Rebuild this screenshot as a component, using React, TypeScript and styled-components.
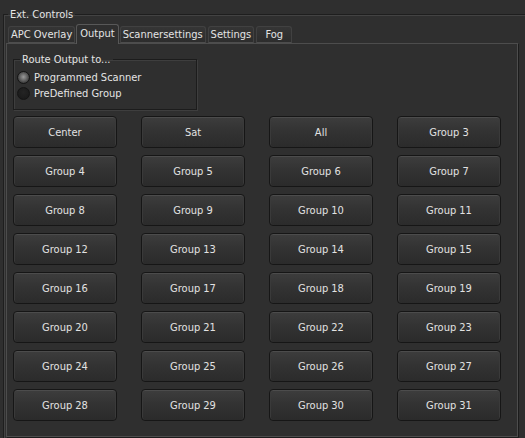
import React, { useState } from 'react'
import styled, { createGlobalStyle } from 'styled-components'

const GlobalStyle = createGlobalStyle`
  html, body {
    margin: 0;
    padding: 0;
    background: #2f2f2f;
  }
  body {
    font-family: "DejaVu Sans Condensed", "Liberation Sans", Arial, sans-serif;
    font-size: 11px;
    color: #e0e0e0;
  }
`

const tabs = ['APC Overlay', 'Output', 'Scannersettings', 'Settings', 'Fog']
const buttons = ['Center', 'Sat', 'All', ...Array.from({ length: 29 }, (_, i) => `Group ${i + 3}`)]

export default function App() {
  const [tab, setTab] = useState('Output')
  const [route, setRoute] = useState('scanner')

  return (
    <Window>
      <GlobalStyle />
      <Frame>
        <Legend>Ext. Controls</Legend>
        <TabBar>
          {tabs.map(t => (
            <Tab key={t} $active={t === tab} onClick={() => setTab(t)}>{t}</Tab>
          ))}
        </TabBar>
        <Pane>
          <RouteBox>
            <RouteLegend>Route Output to...</RouteLegend>
            <RadioRow onClick={() => setRoute('scanner')}>
              <Radio $checked={route === 'scanner'} />
              Programmed Scanner
            </RadioRow>
            <RadioRow onClick={() => setRoute('group')}>
              <Radio $checked={route === 'group'} />
              PreDefined Group
            </RadioRow>
          </RouteBox>
          <ButtonGrid>
            {buttons.map(b => (
              <PushButton key={b}>{b}</PushButton>
            ))}
          </ButtonGrid>
        </Pane>
      </Frame>
    </Window>
  )
}

const Window = styled.div`
  width: 525px;
  height: 438px;
  overflow: hidden;
  padding: 8px 0 0 3px;
  box-sizing: border-box;
`

const Frame = styled.fieldset`
  margin: 0;
  padding: 2px 7px 0 2px;
  height: 440px;
  border: 1px solid #1e1e1e;
  border-right: none;
  box-shadow: inset 1px 1px 0 #434343;
  box-sizing: border-box;
`

const Legend = styled.legend`
  padding: 0 2px;
  margin-left: 2px;
  line-height: 13px;
  color: #e6e6e6;
`

const TabBar = styled.div`
  display: flex;
  align-items: flex-end;
  gap: 2px;
  padding-left: 2px;
  height: 20px;
  position: relative;
  z-index: 1;
`

const Tab = styled.div<{ $active: boolean }>`
  height: ${p => (p.$active ? 20 : 17)}px;
  line-height: ${p => (p.$active ? 17 : 16)}px;
  min-width: 36px;
  text-align: center;
  padding: 0 ${p => (p.$active ? 3 : 2)}px;
  margin: 0 ${p => (p.$active ? -1 : 0)}px ${p => (p.$active ? -1 : 0)}px;
  border: 1px solid ${p => (p.$active ? '#585858' : '#414141')};
  border-bottom: ${p => (p.$active ? 'none' : '1px solid #4d4d4d')};
  border-radius: 3px 3px 0 0;
  background: ${p => (p.$active ? '#2f2f2f' : 'linear-gradient(#353535, #2d2d2d)')};
  color: #e4e4e4;
  cursor: default;
  box-sizing: border-box;
`

const Pane = styled.div`
  height: 394px;
  border: 1px solid #4d4d4d;
  box-shadow: 1px 1px 0 #1c1c1c;
  padding: 9px 0 0 6px;
  box-sizing: border-box;
`

const RouteBox = styled.fieldset`
  margin: 0;
  width: 184px;
  height: 57px;
  padding: 3px 0 0 3px;
  border: 1px solid #1c1c1c;
  box-shadow: inset 1px 1px 0 #3e3e3e, 1px 1px 0 #3e3e3e;
  box-sizing: border-box;
`

const RouteLegend = styled.legend`
  padding: 0 2px;
  margin-left: 3px;
  line-height: 13px;
  color: #e4e4e4;
`

const RadioRow = styled.label`
  display: flex;
  align-items: center;
  gap: 4px;
  height: 16px;
  color: #e4e4e4;
  cursor: default;
`

const Radio = styled.span<{ $checked: boolean }>`
  width: 13px;
  height: 13px;
  border-radius: 50%;
  border: 1px solid #141414;
  box-sizing: border-box;
  background: ${p =>
    p.$checked
      ? 'radial-gradient(circle at 50% 45%, #9a9a9a 0, #6e6e6e 35%, #3a3a3a 75%)'
      : 'radial-gradient(circle at 50% 40%, #242424 0, #1a1a1a 80%)'};
`

const ButtonGrid = styled.div`
  display: grid;
  grid-template-columns: repeat(4, 104px);
  grid-auto-rows: 32px;
  column-gap: 24px;
  row-gap: 7px;
  margin-top: 6px;
`

const PushButton = styled.button`
  font-family: "DejaVu Sans Condensed", "Liberation Sans", Arial, sans-serif;
  font-size: 11px;
  color: #e2e2e2;
  border: 1px solid #161616;
  border-radius: 4px;
  background: linear-gradient(#3d3d3d 0, #333 45%, #2b2b2b 100%);
  box-shadow: inset 0 1px 0 #4c4c4c, inset 1px 0 0 #3a3a3a, inset -1px 0 0 #3a3a3a;
  padding: 0;
  cursor: default;
  :focus {
    outline: none;
  }
`
